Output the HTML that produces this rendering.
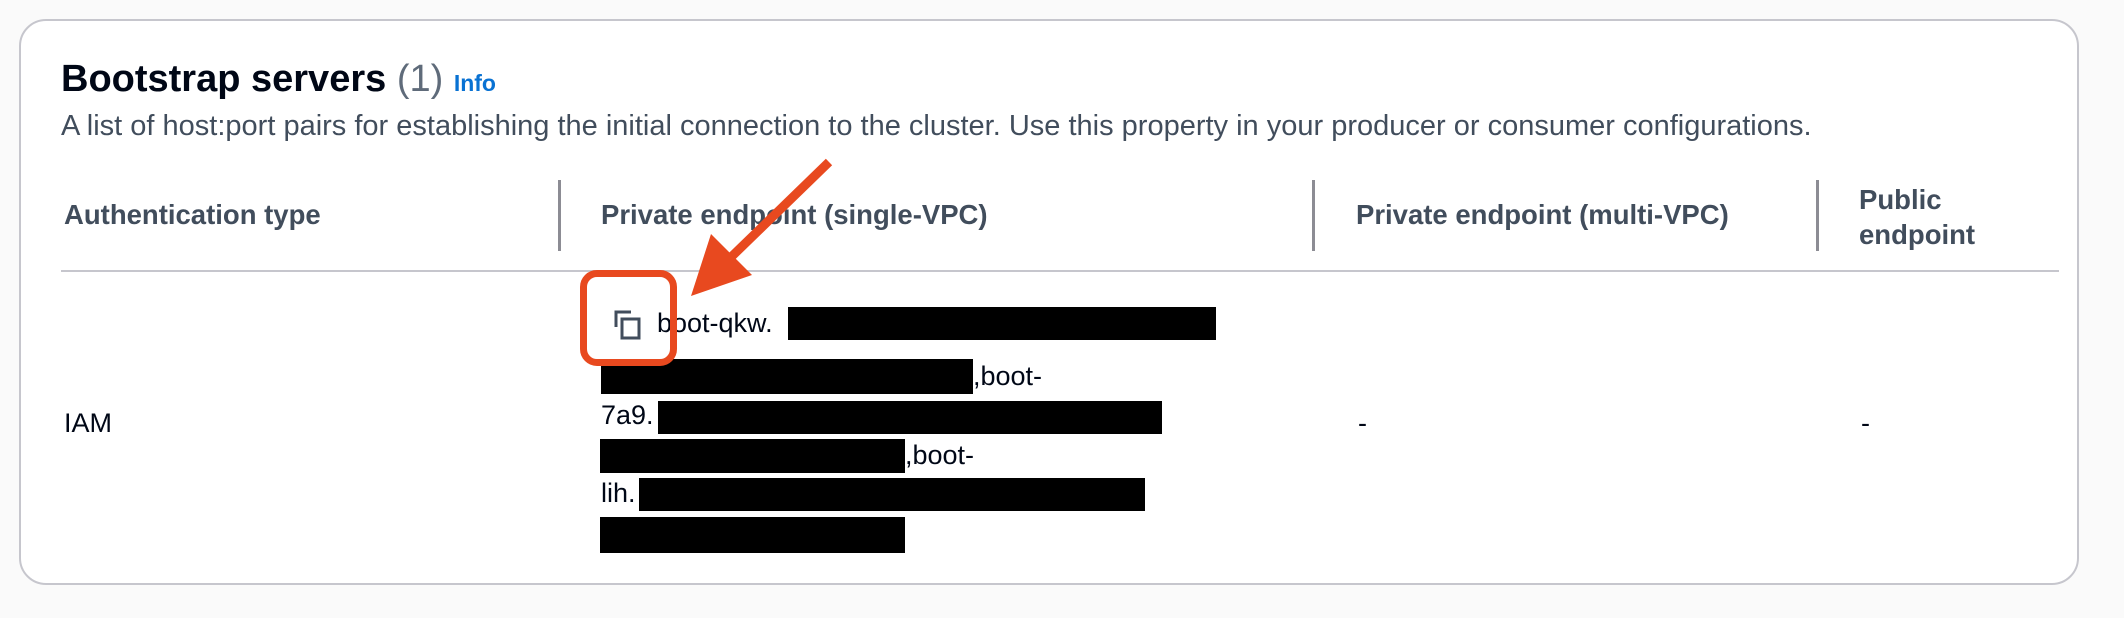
<!DOCTYPE html>
<html><head><meta charset="utf-8"><style>
html,body{margin:0;padding:0}
body{width:2124px;height:618px;background:#fafafa;position:relative;overflow:hidden;font-family:"Liberation Sans",sans-serif;color:#000716}
.card{position:absolute;left:19px;top:19px;width:2060px;height:566px;background:#fff;border:2px solid #c6c6cd;border-radius:27px;box-sizing:border-box}
.a{position:absolute;white-space:nowrap}
.h{font-weight:bold;font-size:27.5px;color:#414d5c}
.div{position:absolute;width:3px;background:#8c8c94;top:180px;height:71px}
.b{position:absolute;background:#000}
.t{position:absolute;font-size:27px;color:#000716;white-space:nowrap}
</style></head><body>
<div class="card"></div>
<div class="a" style="left:61px;top:58px;font-size:38px;font-weight:bold;color:#000716">Bootstrap servers <span style="font-weight:normal;color:#5f6b7a">(1)</span> <span style="font-size:23px;color:#0972d3">Info</span></div>
<div class="a" style="left:61px;top:110px;font-size:29px;color:#414d5c">A list of host:port pairs for establishing the initial connection to the cluster. Use this property in your producer or consumer configurations.</div>
<div class="a h" style="left:64px;top:199px">Authentication type</div>
<div class="a h" style="left:601px;top:199px">Private endpoint (single-VPC)</div>
<div class="a h" style="left:1356px;top:199px">Private endpoint (multi-VPC)</div>
<div class="a h" style="left:1859px;top:182px;line-height:35px">Public<br>endpoint</div>
<div class="div" style="left:558px"></div>
<div class="div" style="left:1312px"></div>
<div class="div" style="left:1816px"></div>
<div style="position:absolute;left:61px;top:270px;width:1998px;height:2px;background:#c6c6cd"></div>
<div class="t" style="left:64px;top:408px">IAM</div>
<div class="t" style="left:1358px;top:408px">-</div>
<div class="t" style="left:1861px;top:408px">-</div>
<svg style="position:absolute;left:612px;top:309px" width="32" height="32" viewBox="0 0 32 32"><path d="M4 18V3h15" fill="none" stroke="#414d5c" stroke-width="3"/><rect x="10" y="10" width="17" height="19" fill="none" stroke="#414d5c" stroke-width="3"/></svg>
<div class="t" style="left:657px;top:308px">boot-qkw.</div>
<div class="b" style="left:788px;top:307px;width:428px;height:33px"></div>
<div class="b" style="left:601px;top:359px;width:372px;height:35px"></div>
<div class="t" style="left:973px;top:361px">,boot-</div>
<div class="t" style="left:601px;top:400px">7a9.</div>
<div class="b" style="left:658px;top:401px;width:504px;height:33px"></div>
<div class="b" style="left:600px;top:439px;width:305px;height:34px"></div>
<div class="t" style="left:905px;top:440px">,boot-</div>
<div class="t" style="left:601px;top:478px">lih.</div>
<div class="b" style="left:639px;top:478px;width:506px;height:33px"></div>
<div class="b" style="left:600px;top:517px;width:305px;height:36px"></div>
<div style="position:absolute;left:580px;top:270px;width:97px;height:96px;border:7px solid #e8491f;border-radius:17px;box-sizing:border-box"></div>
<svg style="position:absolute;left:0;top:0" width="2124" height="618"><line x1="829" y1="162" x2="725" y2="263" stroke="#e8491f" stroke-width="9"/><polygon points="691,296 711,234 752,275" fill="#e8491f"/></svg>
</body></html>
